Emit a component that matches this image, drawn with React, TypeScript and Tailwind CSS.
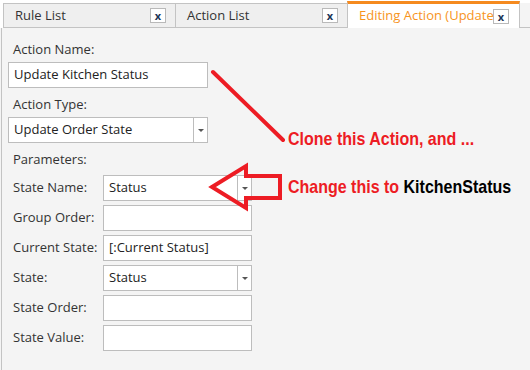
import { ReactNode } from "react";

const ui = { fontFamily: '"Open Sans", "Noto Sans", sans-serif' };
const note = { fontFamily: '"Liberation Sans", Arial, sans-serif' };

function CloseBox() {
  return (
    <span className="flex h-[15px] w-[16px] shrink-0 items-center justify-center border border-[#b9b9b9] bg-white text-[11px] font-bold leading-none text-[#1d3557]">
      x
    </span>
  );
}

function Tab({ label, active }: { label: string; active?: boolean }) {
  if (active) {
    return (
      <div className="flex h-[27px] w-[173px] items-center overflow-hidden border-x border-x-[#c3c3c3] border-t-[3px] border-t-[#f58a1f] bg-white pl-[11px] pr-[10px]">
        <span className="-mr-[6px] flex-1 overflow-hidden whitespace-nowrap text-[13px] text-[#f7941d]">{label}</span>
        <span className="relative">
          <CloseBox />
        </span>
      </div>
    );
  }
  return (
    <div className="-mr-px flex h-[25px] w-[173px] items-center border border-[#c3c3c3] bg-[#efefef] pl-[11px] pr-[9px]">
      <span className="flex-1 whitespace-nowrap text-[13px] text-[#333]">{label}</span>
      <CloseBox />
    </div>
  );
}

function Field({ value, w, select }: { value?: string; w: string; select?: boolean }) {
  return (
    <div className={`flex h-[26px] ${w} items-center border border-[#bdbdbd] bg-white`}>
      <span className="flex-1 truncate pl-[5px] text-[13px] text-[#222]">{value}</span>
      {select && (
        <span className="flex h-full w-[14px] items-center justify-center border-l border-[#bdbdbd]">
          <span className="h-0 w-0 border-x-[3px] border-t-[3px] border-x-transparent border-t-[#555]" />
        </span>
      )}
    </div>
  );
}

function Row({ label, children }: { label: string; children: ReactNode }) {
  return (
    <div className="flex items-center">
      <span className="w-[95px] pl-[5px] text-[13px] text-[#333]">{label}</span>
      {children}
    </div>
  );
}

export default function App() {
  return (
    <div className="relative h-[370px] w-[530px] overflow-hidden bg-[#f4f4f4]" style={ui}>
      <div className="flex h-[28px] items-end bg-white pl-[3px]">
        <Tab label="Rule List" />
        <Tab label="Action List" />
        <Tab label="Editing Action (Update Kitchen Status)" active />
        <div className="h-[25px] flex-1 border-b border-[#c3c3c3] bg-[#f4f4f4]" />
      </div>

      <div className="ml-px flex h-[342px] flex-col border-l border-[#c3c3c3] pl-[6px] pt-[13px]">
        <span className="pl-[5px] text-[13px] leading-[16px] text-[#333]">Action Name:</span>
        <div className="mt-[5px]">
          <Field value="Update Kitchen Status" w="w-[200px]" />
        </div>
        <span className="mt-[8px] pl-[5px] text-[13px] leading-[16px] text-[#333]">Action Type:</span>
        <div className="mt-[5px]">
          <Field value="Update Order State" w="w-[200px]" select />
        </div>
        <span className="mt-[8px] pl-[5px] text-[13px] leading-[16px] text-[#333]">Parameters:</span>
        <div className="mt-[8px] flex flex-col gap-[4px]">
          <Row label="State Name:">
            <Field value="Status" w="w-[149px]" select />
          </Row>
          <Row label="Group Order:">
            <Field w="w-[149px]" />
          </Row>
          <Row label="Current State:">
            <Field value="[:Current Status]" w="w-[149px]" />
          </Row>
          <Row label="State:">
            <Field value="Status" w="w-[149px]" select />
          </Row>
          <Row label="State Order:">
            <Field w="w-[149px]" />
          </Row>
          <Row label="State Value:">
            <Field w="w-[149px]" />
          </Row>
        </div>
      </div>

      <svg className="pointer-events-none absolute left-0 top-0" width="530" height="370">
        <line x1="213" y1="72" x2="283" y2="140" stroke="#ed1c24" strokeWidth="4" strokeLinecap="round" />
        <polygon
          points="212,187 246,166 246,176 280,176 280,198 246,198 246,208"
          fill="none"
          stroke="#ed1c24"
          strokeWidth="4"
          strokeLinejoin="miter"
        />
      </svg>

      <div
        className="absolute left-[288px] top-[129px] scale-y-[1.2] whitespace-nowrap text-[16px] font-bold leading-[20px] text-[#ed1c24]"
        style={note}
      >
        Clone this Action, and ...
      </div>
      <div
        className="absolute left-[288px] top-[177px] scale-y-[1.2] whitespace-nowrap text-[16px] font-bold leading-[20px]"
        style={note}
      >
        <span className="text-[#ed1c24]">Change this to </span>
        <span className="text-black">KitchenStatus</span>
      </div>
    </div>
  );
}
